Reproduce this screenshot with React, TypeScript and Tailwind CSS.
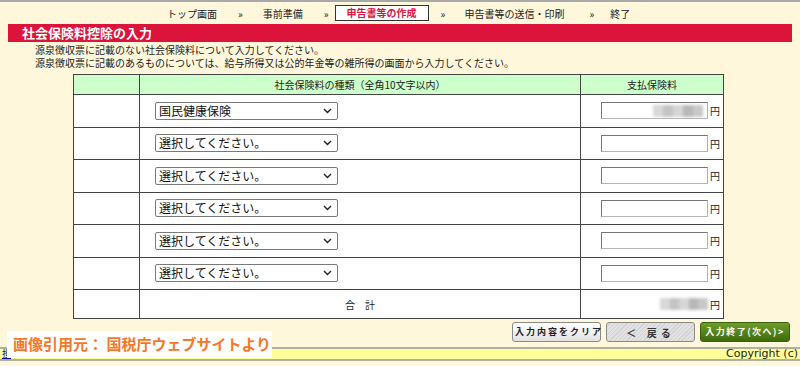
import React from "react";

const jp = "font-['Meiryo','Noto_Sans_CJK_JP','Noto_Sans',sans-serif]";

function Blurred({ width }: { width: number }) {
  return (
    <div className="flex h-[12px] blur-[1.5px]" style={{ width }}>
      <div className="flex-1 bg-[#d8d8d8]" />
      <div className="flex-1 bg-[#c4c4c4]" />
      <div className="flex-1 bg-[#d6d6d6]" />
      <div className="flex-1 bg-[#b8b8b8]" />
      <div className="flex-1 bg-[#c8c8c8]" />
    </div>
  );
}

function KindSelect({ value }: { value: string }) {
  return (
    <div className="relative w-[183px] h-[18px]">
      <select
        defaultValue={value}
        className="appearance-none w-full h-full border border-[#7a7a7a] rounded-[2px] bg-white pl-[3px] text-[12px] leading-[16px] text-[#111] outline-none"
      >
        <option>{value}</option>
      </select>
      <svg
        className="absolute right-[6px] top-[6px] pointer-events-none"
        width="9"
        height="6"
        viewBox="0 0 9 6"
      >
        <path d="M1 1 L4.5 4.5 L8 1" stroke="#222" strokeWidth="1.4" fill="none" />
      </svg>
    </div>
  );
}

function AmountInput({ filled }: { filled?: boolean }) {
  return (
    <div className="flex items-center justify-end gap-[2px]">
      <div className="w-[107px] h-[17px] bg-white border border-[#b4b4b4] border-t-[#767676] border-l-[#767676] flex items-center justify-end pr-[4px]">
        {filled && <Blurred width={50} />}
      </div>
      <span className="text-[10px] text-[#222] w-[9px]">円</span>
    </div>
  );
}

export default function App() {
  const rows = ["国民健康保険", "選択してください。", "選択してください。", "選択してください。", "選択してください。", "選択してください。"];

  return (
    <div className={`${jp} relative w-[800px] h-[366px] overflow-hidden bg-[#fff7dc] border-t-2 border-[#a8a8a8] text-[#222]`}>
      {/* step nav */}
      <div className="flex items-center h-[22px] pl-[167px] text-[10px] whitespace-nowrap">
        <span>トップ画面</span>
        <span className="ml-[21px]">»</span>
        <span className="ml-[20px]">事前準備</span>
        <span className="ml-[21px]">»</span>
        <span className="ml-[6px] w-[94px] h-[16px] leading-[14px] text-center border border-[#333] bg-white text-[#dc143c] font-bold">
          申告書等の作成
        </span>
        <span className="ml-[12px]">»</span>
        <span className="ml-[19px]">申告書等の送信・印刷</span>
        <span className="ml-[25px]">»</span>
        <span className="ml-[16px]">終了</span>
      </div>

      {/* title */}
      <div className="mx-[8px] h-[18px] bg-[#dc143c] text-white font-bold text-[13px] leading-[18px] pl-[14px]">
        社会保険料控除の入力
      </div>

      <div className="pl-[35px] pt-[1px] text-[10px] leading-[13px]">
        <p>源泉徴収票に記載のない社会保険料について入力してください。</p>
        <p>源泉徴収票に記載のあるものについては、給与所得又は公的年金等の雑所得の画面から入力してください。</p>
      </div>

      {/* table */}
      <table className="ml-[73px] mt-[5px] w-[651px] border-collapse bg-white text-[10px]">
        <thead>
          <tr className="bg-[#ccffcc] h-[20px]">
            <th className="w-[66px] border border-[#444] p-0" />
            <th className="w-[441px] border border-[#444] font-normal p-0 leading-[12px]">社会保険料の種類（全角10文字以内）</th>
            <th className="border border-[#444] font-normal p-0 leading-[12px]">支払保険料</th>
          </tr>
        </thead>
        <tbody>
          {rows.map((r, i) => (
            <tr key={i} className="h-[32.5px]">
              <td className="border border-[#444] p-0" />
              <td className="border border-[#444] pl-[15px] py-0">
                <KindSelect value={r} />
              </td>
              <td className="border border-[#444] pr-[4px] py-0">
                <AmountInput filled={i === 0} />
              </td>
            </tr>
          ))}
          <tr className="h-[29px]">
            <td className="border border-[#444] p-0" />
            <td className="border border-[#444] text-center p-0">合　計</td>
            <td className="border border-[#444] pr-[4px] py-0">
              <div className="flex items-center justify-end gap-[2px]">
                <Blurred width={48} />
                <span className="w-[9px]">円</span>
              </div>
            </td>
          </tr>
        </tbody>
      </table>

      {/* buttons */}
      <div className="flex justify-end gap-[5px] pr-[10px] mt-[3px] text-[9px] whitespace-nowrap">
        <button className="w-[89px] h-[20px] rounded-[3px] border border-[#8a8a8a] bg-gradient-to-b from-white to-[#e2e2e2] text-[#222] font-bold tracking-[2px] pl-[2px]">
          入力内容をクリア
        </button>
        <button className="w-[89px] h-[20px] rounded-[3px] border border-[#8a8a8a] bg-[repeating-linear-gradient(135deg,#e2e2e2_0px,#e2e2e2_2px,#d2d2d2_2px,#d2d2d2_3px)] text-[#333] font-bold tracking-[4px] text-[10px]">
          ＜ 戻る
        </button>
        <button className="w-[90px] h-[20px] rounded-[3px] border border-[#3d6010] bg-gradient-to-b from-[#6d9e2a] to-[#3f6a0c] text-white font-bold tracking-[1.5px]">
          入力終了(次へ)&gt;
        </button>
      </div>

      {/* footer */}
      <div className="mt-[5px] h-[14px] bg-[#ffff99] border-t-2 border-b-2 border-[#b0b0a0] flex items-center justify-between px-[2px]">
        <span className="text-[9px] leading-[10px] text-[#0000cc] underline">担</span>
        <span className="font-['Verdana','DejaVu_Sans',sans-serif] text-[11px] leading-[10px]">Copyright (c)</span>
      </div>

      {/* source credit overlay */}
      <div className="absolute left-[7px] top-[329px] w-[265px] h-[27px] bg-white flex items-center pl-[6px] text-[15px] font-bold text-[#f7772a]">
        画像引用元：&nbsp;国税庁ウェブサイトより
      </div>
    </div>
  );
}
